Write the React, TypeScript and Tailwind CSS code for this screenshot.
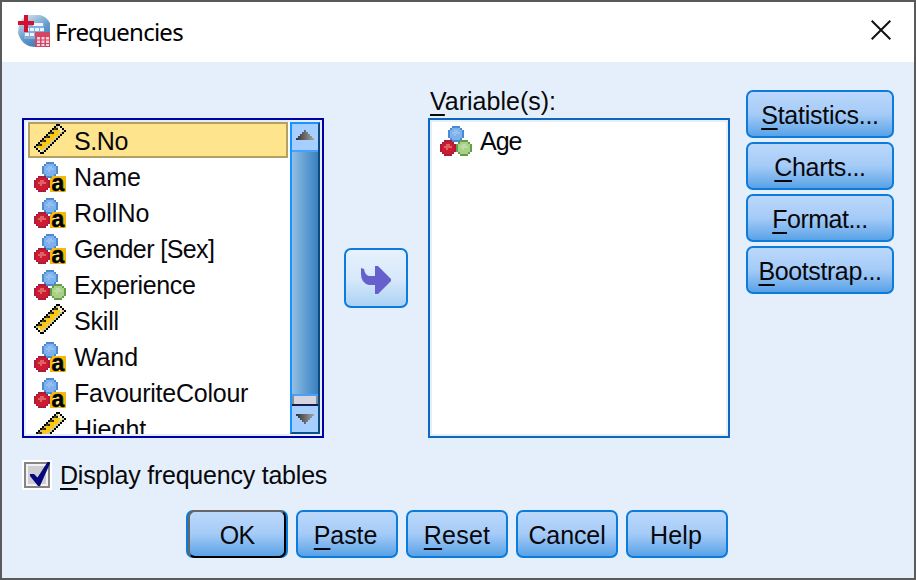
import React from "react";

type Px = { x: number; y: number; c: string };

const palettes: Record<string, string[]> = {
  blue: ["#4a8ad2", "#7eb1ea", "#93c0f2"],
  red: ["#b0193f", "#cb1d2f", "#dd6266"],
  green: ["#659f42", "#a9d089", "#bcdca4"],
};

const ballRows = [
  "..0000..",
  ".011110.",
  "01122110",
  "01222210",
  "01121110",
  "01111110",
  ".011110.",
  "..0000..",
];

function ball(kind: string, ox: number, oy: number): Px[] {
  const out: Px[] = [];
  ballRows.forEach((row, y) =>
    row.split("").forEach((ch, x) => {
      if (ch !== ".") out.push({ x: ox + x, y: oy + y, c: palettes[kind][Number(ch)] });
    }),
  );
  return out;
}

function ruler(): Px[] {
  const out: Px[] = [];
  for (let y = 0; y < 18; y++)
    for (let x = 0; x < 16; x++) {
      const s = x + y;
      const d = x - y;
      if (s < 12 || s > 19 || d < -12 || d > 11) continue;
      let c = "#ffc60c";
      if (s === 12 || s === 19 || d <= -12 || d >= 11) c = "#000000";
      else if (s === 13) c = (d + 13) % 4 === 0 ? "#4a4418" : "#c0c08a";
      else if (s === 18) c = "#cfc98a";
      else if (d > 8 || d < -10) c = "#f1eebf";
      else if (s === 14 && (d + 12) % 4 === 0) c = "#2c260a";
      else if (s === 17 && (d + 13) % 4 === 0) c = "#d9cf80";
      out.push({ x, y, c });
    }
  return out;
}

const icons: Record<string, Px[]> = {
  scale: ruler(),
  string: [...ball("blue", 4, 2), ...ball("red", 0, 9)],
  nominal: [...ball("blue", 4, 2), ...ball("red", 0, 9), ...ball("green", 8, 9)],
};

function VarIcon({ kind }: { kind: string }) {
  return (
    <svg className="h-9 w-8 shrink-0" viewBox="0 0 16 18" shapeRendering="crispEdges">
      {icons[kind].map((p, i) => (
        <rect key={i} x={p.x} y={p.y} width="1" height="1" fill={p.c} />
      ))}
      {kind === "string" && (
        <>
          <path d="M9 9H16V17H8V10H9Z" fill="#f6b80c" />
          <path d="M9.500 11.500h5v5h-5z" fill="#fbf09a" />
          <text
            x="8.7"
            y="16.600"
            fontSize="11.5"
            fontWeight="bold"
            fontFamily="Liberation Sans, Arial, sans-serif"
            stroke="#000"
            strokeWidth="0.25"
          >
            a
          </text>
        </>
      )}
    </svg>
  );
}

function Mnemonic({ text }: { text: string }) {
  return (
    <>
      <span className="underline decoration-2 underline-offset-[4px] [text-decoration-skip-ink:none]">
        {text[0]}
      </span>
      {text.slice(1)}
    </>
  );
}

const face =
  "flex h-12 items-center justify-center rounded-[7px] border-2 border-[#0b7bdc] bg-linear-to-b from-[#bcd8fb] via-[#a4cbf7] to-[#58a2e7] pt-[3px] leading-none";

const variables = [
  { name: "S.No", kind: "scale", t: "tracking-[-0.4px]" },
  { name: "Name", kind: "string", t: "tracking-[0.1px]" },
  { name: "RollNo", kind: "string", t: "tracking-[0.1px]" },
  { name: "Gender [Sex]", kind: "string", t: "tracking-[-0.58px]" },
  { name: "Experience", kind: "nominal", t: "tracking-[-0.35px]" },
  { name: "Skill", kind: "scale", t: "tracking-[-0.2px]" },
  { name: "Wand", kind: "string", t: "tracking-[-0.1px]" },
  { name: "FavouriteColour", kind: "string", t: "tracking-[-0.25px]" },
  { name: "Hieght", kind: "scale", t: "tracking-[0px]" },
];

const sideButtons = [
  { text: "Statistics...", t: "tracking-[-0.25px]" },
  { text: "Charts...", t: "tracking-[-0.35px]" },
  { text: "Format...", t: "tracking-[-0.5px]" },
  { text: "Bootstrap...", t: "tracking-[-0.4px]" },
];

function TitleIcon() {
  return (
    <svg className="h-8 w-8" viewBox="0 0 32 32">
      <defs>
        <linearGradient id="globe" x1="0.2" y1="0" x2="0.8" y2="1">
          <stop offset="0" stopColor="#d3e3f0" />
          <stop offset="0.5" stopColor="#6a9ecb" />
          <stop offset="1" stopColor="#2f74b2" />
        </linearGradient>
      </defs>
      <path d="M10 0H22Q28 1 32 8V32H18Q4 32 0 18Q0 4 10 0Z" fill="url(#globe)" />
      <path d="M6 8H26V24H6Z" fill="#84aee0" />
      <path
        d="M15 8h10v3H15zM7 13h4v3H7zM12 13h4v3h-4zM17 13h4v3h-4zM22 13h4v3h-4zM7 18h4v3H7zM12 18h4v3h-4z"
        fill="#eef4fc"
      />
      <path d="M6 0h4v6h6v4h-6v7H6v-7H0V6h6z" fill="#d5102f" />
      <rect x="17" y="17" width="15" height="15" rx="1" fill="#d34562" />
      <path
        d="M19 22h3v2.5h-3zM23.5 22h3v2.5h-3zM28 22h3v2.5h-3zM19 25.5h3V28h-3zM23.5 25.5h3V28h-3zM28 25.5h3V28h-3zM19 29h3v2h-3zM23.5 29h3v2h-3zM28 29h3v2h-3z"
        fill="#f3d3de"
      />
    </svg>
  );
}

function ScrollArrow({ down }: { down?: boolean }) {
  return (
    <svg
      className={down ? "h-[10px] w-[18px] -scale-y-100" : "h-[10px] w-[18px]"}
      viewBox="0 0 18 10"
      shapeRendering="crispEdges"
    >
      <defs>
        <linearGradient id="arrow" x1="0" y1="0" x2="1" y2="0">
          <stop offset="0.1" stopColor="#3c3c3c" />
          <stop offset="0.55" stopColor="#707070" />
          <stop offset="1" stopColor="#a4a4a4" />
        </linearGradient>
      </defs>
      <path d="M8 0h2v2h2v2h2v2h2v2h2v2H0V8h2V6h2V4h2V2h2z" fill="url(#arrow)" />
    </svg>
  );
}

function Scrollbar() {
  return (
    <div className="ml-[2px] flex w-[30px] flex-col border-b-2 border-l-2 border-r-2 border-t-2 border-b-[#0c4f88] border-l-[#1b93ff] border-r-[#0c4a80] border-t-[#1b93ff]">
      <div className="flex h-7 items-start justify-center border-b-2 border-[#47a0fa] bg-[#a6ceff] pt-[6px]">
        <ScrollArrow />
      </div>
      <div className="flex-1 bg-linear-to-r from-[#94bfe3] via-[#629fd2] to-[#3980bf]" />
      <div className="h-3 border-b-2 border-t-2 border-b-[#10204c] border-t-[#47a0fa]">
        <div className="h-full border-x-2 border-[#8b8b94] bg-[#d6d5df]" />
      </div>
      <div className="flex h-[26px] justify-center bg-[#a6ceff] pt-2">
        <ScrollArrow down />
      </div>
    </div>
  );
}

export default function App() {
  return (
    <div className="flex h-[580px] w-[916px] flex-col overflow-hidden border-2 border-[#5a5a5a] bg-[#e4effb] font-['Liberation_Sans',Arial,sans-serif] text-[25px] text-[#08080c]">
      <header className="flex h-[60px] shrink-0 items-start bg-white pl-4 pr-[23px]">
        <div className="pt-[13px]">
          <TitleIcon />
        </div>
        <h1 className="ml-[5px] mt-3 flex-1 font-['Noto_Sans','Open_Sans',sans-serif] text-[24px] leading-9 tracking-[-0.75px] text-black">
          Frequencies
        </h1>
        <svg className="mt-[18px] h-5 w-5" viewBox="0 0 20 20" fill="none" stroke="#111" strokeWidth="2">
          <path d="M0.7 0.7 19.3 19.3M19.3 0.7 0.7 19.3" />
        </svg>
      </header>

      <main className="flex h-[376px] shrink-0 items-start pl-5 pt-7">
        <div className="mt-7 flex h-[320px] w-[302px] border-2 border-[#0000a8] p-[2px]">
          <ul className="flex-1 overflow-hidden bg-white pl-[2px]">
            {variables.map((v, i) => (
              <li
                key={v.name}
                className={
                  i === 0
                    ? "flex h-9 items-center bg-[#fee48c] pl-[6px] outline-2 -outline-offset-2 outline-[#b3a062]"
                    : "flex h-9 items-center pl-[6px]"
                }
              >
                <VarIcon kind={v.kind} />
                <span className={"ml-2 whitespace-nowrap pt-[3px] leading-none " + v.t}>{v.name}</span>
              </li>
            ))}
          </ul>
          <div className="flex bg-white">
            <Scrollbar />
          </div>
        </div>

        <button className="ml-5 mt-[158px] flex h-[60px] w-16 items-center justify-center rounded-[7px] border-2 border-[#0b7bdc] bg-linear-to-b from-[#e6f1fc] via-[#d8e9fa] to-[#acd2f5]">
          <svg className="mt-1 h-7 w-[30px]" viewBox="0 0 30 28">
            <path d="M0 2L3 3Q4 9 8 10H14V0H17L30 13V15L17 28H14V19H8Q0 17 0 8Z" fill="#6560cc" />
          </svg>
        </button>

        <div className="ml-5 w-[302px]">
          <div className="flex h-7 items-start pl-[2px] leading-none tracking-[0px]">
            <span className="-mt-px">
              <Mnemonic text="Variable(s):" />
            </span>
          </div>
          <div className="h-[320px] border-2 border-[#0d67bf] p-[2px]">
            <div className="h-full bg-white pl-2">
              <div className="flex h-9 items-center">
                <VarIcon kind="nominal" />
                <span className="ml-2 pt-[3px] leading-none tracking-[-1px]">Age</span>
              </div>
            </div>
          </div>
        </div>

        <div className="ml-4 flex w-[148px] flex-col gap-1">
          {sideButtons.map((b) => (
            <button key={b.text} className={face + " " + b.t}>
              <span>
                <Mnemonic text={b.text} />
              </span>
            </button>
          ))}
        </div>
      </main>

      <label className="mt-5 flex h-[34px] shrink-0 items-start pl-5">
        <span className="mt-[2px] flex h-[30px] w-[30px] items-center justify-center bg-white">
          <svg className="h-[26px] w-[26px]" viewBox="0 0 26 26">
            <rect width="26" height="26" fill="#858585" />
            <rect x="2" y="2" width="22" height="22" fill="#f2f2f4" />
            <rect x="4" y="4" width="18" height="18" fill="#cfcfd2" />
            <path d="M6 12L10 12L13.5 15.5L23.5 0H26V1.500L16 24H14L6 14Z" fill="#08087e" />
          </svg>
        </span>
        <span className="ml-2 mt-[5px] leading-none tracking-[-0.22px]">
          <Mnemonic text="Display frequency tables" />
        </span>
      </label>

      <footer className="mt-[18px] flex gap-2 pl-[184px]">
        <button className="rounded-[7px] bg-[#0b7bdc] px-[2px]">
          <span className="flex h-12 w-[98px] items-center justify-center rounded-[7px] border-2 border-b-black border-l-[#666] border-r-black border-t-[#666] bg-linear-to-b from-[#bcd8fb] via-[#a4cbf7] to-[#58a2e7] pt-[3px] leading-none tracking-[-0.8px]">
            OK
          </span>
        </button>
        <button className={face + " w-[102px] pr-[3px] tracking-[-0.1px]"}>
          <span>
            <Mnemonic text="Paste" />
          </span>
        </button>
        <button className={face + " w-[102px] tracking-[0.2px]"}>
          <span>
            <Mnemonic text="Reset" />
          </span>
        </button>
        <button className={face + " w-[102px] tracking-[-0.1px]"}>Cancel</button>
        <button className={face + " w-[102px] pr-[2px] tracking-[0.2px]"}>Help</button>
      </footer>
    </div>
  );
}
